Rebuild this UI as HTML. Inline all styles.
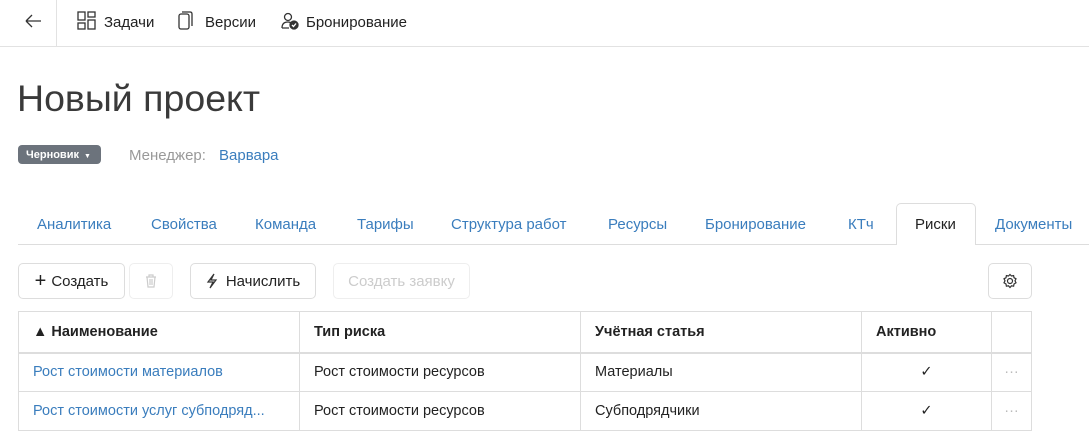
<!DOCTYPE html><html><head><meta charset="utf-8"><style>
*{box-sizing:border-box;margin:0;padding:0}
body{width:1089px;height:447px;overflow:hidden;background:#fff;font-family:"Liberation Sans",sans-serif;font-size:15px;color:#222;position:relative}
.a{position:absolute;white-space:nowrap}
.blue{color:#3a7dbd}
.btn{position:absolute;top:263px;height:36px;border:1px solid #ddd;border-radius:5px;background:#fff;display:flex;align-items:center;justify-content:center;font-size:15px}
table{position:absolute;left:18px;top:311px;border-collapse:collapse;table-layout:fixed}
td{border:1px solid #ddd;padding:0 14px;height:39px;font-size:14.5px;white-space:nowrap;overflow:hidden}
tr.h td{height:41px;font-weight:bold;border-bottom:2px solid #ddd}
</style></head><body>
<div class="a" style="left:0;top:0;width:1089px;height:47px;border-bottom:1px solid #e2e2e2"></div>
<div class="a" style="left:56px;top:0;width:1px;height:46px;background:#e2e2e2"></div>
<svg class="a" style="left:24px;top:13px" width="18" height="16"><path d="M2 8H17M2 8L8 2M2 8L8 14" stroke="#333" stroke-width="1.3" fill="none"/></svg>
<svg class="a" style="left:77px;top:11px" width="20" height="20" fill="none" stroke="#333" stroke-width="1.3"><rect x="1" y="1" width="7" height="8"/><rect x="11" y="1" width="7" height="5"/><rect x="1" y="12" width="7" height="6"/><rect x="11" y="9" width="7" height="9"/></svg>
<div class="a" style="left:104px;top:14px">Задачи</div>
<svg class="a" style="left:177px;top:11px" width="16" height="20" fill="none" stroke="#333" stroke-width="1.3"><rect x="2" y="3" width="10" height="15" rx="2"/><path d="M5 1H13Q15 1 15 3V15"/></svg>
<div class="a" style="left:205px;top:14px">Версии</div>
<svg class="a" style="left:281px;top:12px" width="18" height="18" fill="none" stroke="#333" stroke-width="1.3"><circle cx="7" cy="5" r="3.5"/><path d="M1 16Q1 10 7 10Q9 10 10 11M1 16H8"/><circle cx="13" cy="13" r="4" fill="#333"/><path d="M11 13L12.5 14.5L15 11.5" stroke="#fff"/></svg>
<div class="a" style="left:306px;top:14px">Бронирование</div>
<div class="a" style="left:17px;top:77px;font-size:37.5px;color:#3a3a3a">Новый проект</div>
<div class="a" style="left:18px;top:145px;width:83px;height:19px;background:#6c737c;border-radius:4px;color:#fff;font-size:11px;font-weight:bold;padding:4px 0 0 8px">Черновик <span style="font-size:7px;margin-left:2px">▼</span></div>
<div class="a" style="left:129px;top:147px;color:#999">Менеджер:</div>
<div class="a blue" style="left:219px;top:147px">Варвара</div>
<div class="a" style="left:18px;top:244px;width:1071px;height:1px;background:#ddd"></div>
<div class="a" style="left:896px;top:203px;width:80px;height:42px;border:1px solid #ddd;border-bottom:none;border-radius:5px 5px 0 0;background:#fff"></div>
<div class="a blue" style="left:37px;top:216px">Аналитика</div>
<div class="a blue" style="left:151px;top:216px">Свойства</div>
<div class="a blue" style="left:255px;top:216px">Команда</div>
<div class="a blue" style="left:357px;top:216px">Тарифы</div>
<div class="a blue" style="left:451px;top:216px">Структура работ</div>
<div class="a blue" style="left:608px;top:216px">Ресурсы</div>
<div class="a blue" style="left:705px;top:216px">Бронирование</div>
<div class="a blue" style="left:848px;top:216px">КТч</div>
<div class="a" style="left:915px;top:216px">Риски</div>
<div class="a blue" style="left:995px;top:216px">Документы</div>
<div class="btn" style="left:18px;width:107px"><span style="font-size:20px;margin-right:5px;font-weight:300">+</span>Создать</div>
<div class="btn" style="left:129px;width:44px;border-color:#eee"><svg width="12" height="14" fill="none" stroke="#ccc" stroke-width="1.2"><path d="M1 3H11M4 3V1H8V3M2 3L3 13H9L10 3M5 5V11M7 5V11"/></svg></div>
<div class="btn" style="left:190px;width:126px"><svg width="12" height="16" style="margin-right:8px" fill="none" stroke="#333" stroke-width="1.2"><path d="M8 1L2 9H7L4 15L10 7H5Z"/></svg>Начислить</div>
<div class="btn" style="left:333px;width:137px;color:#ccc;border-color:#eee">Создать заявку</div>
<div class="btn" style="left:988px;width:44px"><svg width="16" height="16" fill="none" stroke="#333" stroke-width="1.2"><circle cx="8" cy="8" r="2.5"/><path d="M8 1.5L9.5 3L11.6 2.6L12 4.7L14 5.8L13 7.8L14 9.8L12 11L11.6 13.2L9.5 12.8L8 14.5L6.5 12.8L4.4 13.2L4 11L2 9.8L3 7.8L2 5.8L4 4.7L4.4 2.6L6.5 3Z"/></svg></div>
<table><colgroup><col width="281"><col width="281"><col width="281"><col width="130"><col width="40"></colgroup>
<tr class="h"><td>▲ Наименование</td><td>Тип риска</td><td>Учётная статья</td><td>Активно</td><td></td></tr>
<tr><td class="blue">Рост стоимости материалов</td><td>Рост стоимости ресурсов</td><td>Материалы</td><td style="text-align:center">✓</td><td style="color:#bbb;text-align:center;padding:0">···</td></tr>
<tr><td class="blue">Рост стоимости услуг субподряд...</td><td>Рост стоимости ресурсов</td><td>Субподрядчики</td><td style="text-align:center">✓</td><td style="color:#bbb;text-align:center;padding:0">···</td></tr>
</table>
</body></html>
